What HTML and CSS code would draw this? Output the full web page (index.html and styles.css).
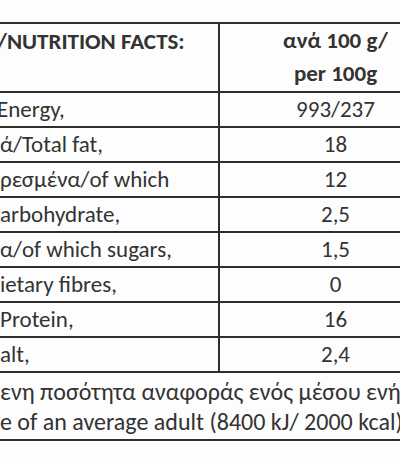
FILE: index.html
```html
<!DOCTYPE html>
<html lang="el">
<head>
    <meta charset="UTF-8">
    <meta name="viewport" content="width=device-width, initial-scale=1.0">
    <title>Nutrition facts</title>
    <link rel="stylesheet" href="styles.css">
</head>
<body>
<table class="facts">
    <colgroup>
        <col class="col-name">
        <col class="col-value">
    </colgroup>
    <tr class="head">
        <td class="name"><span class="cut">/NUTRITION FACTS:</span></td>
        <td class="value">ανά 100 g/<br>per 100g</td>
    </tr>
    <tr>
        <td class="name"><span class="cut-e">Energy,</span></td>
        <td class="value">993/237</td>
    </tr>
    <tr>
        <td class="name">ά/Total fat,</td>
        <td class="value">18</td>
    </tr>
    <tr>
        <td class="name">ρεσμένα/of which</td>
        <td class="value">12</td>
    </tr>
    <tr>
        <td class="name">arbohydrate,</td>
        <td class="value">2,5</td>
    </tr>
    <tr>
        <td class="name">α/of which sugars,</td>
        <td class="value">1,5</td>
    </tr>
    <tr>
        <td class="name">ietary fibres,</td>
        <td class="value">0</td>
    </tr>
    <tr>
        <td class="name">Protein,</td>
        <td class="value">16</td>
    </tr>
    <tr>
        <td class="name">alt,</td>
        <td class="value">2,4</td>
    </tr>
    <tr>
        <td class="note" colspan="2">ενη ποσότητα αναφοράς ενός μέσου ενήλικα<br>e of an average adult (8400 kJ/ 2000 kcal)</td>
    </tr>
</table>
</body>
</html>
```

FILE: styles.css
```css
body {
    margin: 0;
    background-color: #fdfdfd;
    overflow: hidden;
    font-family: Carlito, Lato, "Open Sans", sans-serif;
    font-size: 23px;
    color: #333333;
}

.facts {
    margin-top: 22px;
    border-collapse: collapse;
    table-layout: fixed;
    width: 452px;
}

.col-name {
    width: 219px;
}

.col-value {
    width: 233px;
}

.facts td {
    padding: 0;
    line-height: 33px;
    border: 2px solid #2e2e2e;
    border-left: none;
    white-space: nowrap;
    vertical-align: top;
}

.facts .name {
    text-align: left;
}

.facts .value {
    text-align: center;
}

.head td {
    font-weight: bold;
    height: 66px;
}

.head .name {
    padding-top: 1px;
}

.cut {
    margin-left: -3px;
}

.cut-e {
    margin-left: -3px;
}

.facts .note {
    font-size: 24px;
    line-height: 30px;
    padding: 4px 0 2px;
    overflow: hidden;
}
```
